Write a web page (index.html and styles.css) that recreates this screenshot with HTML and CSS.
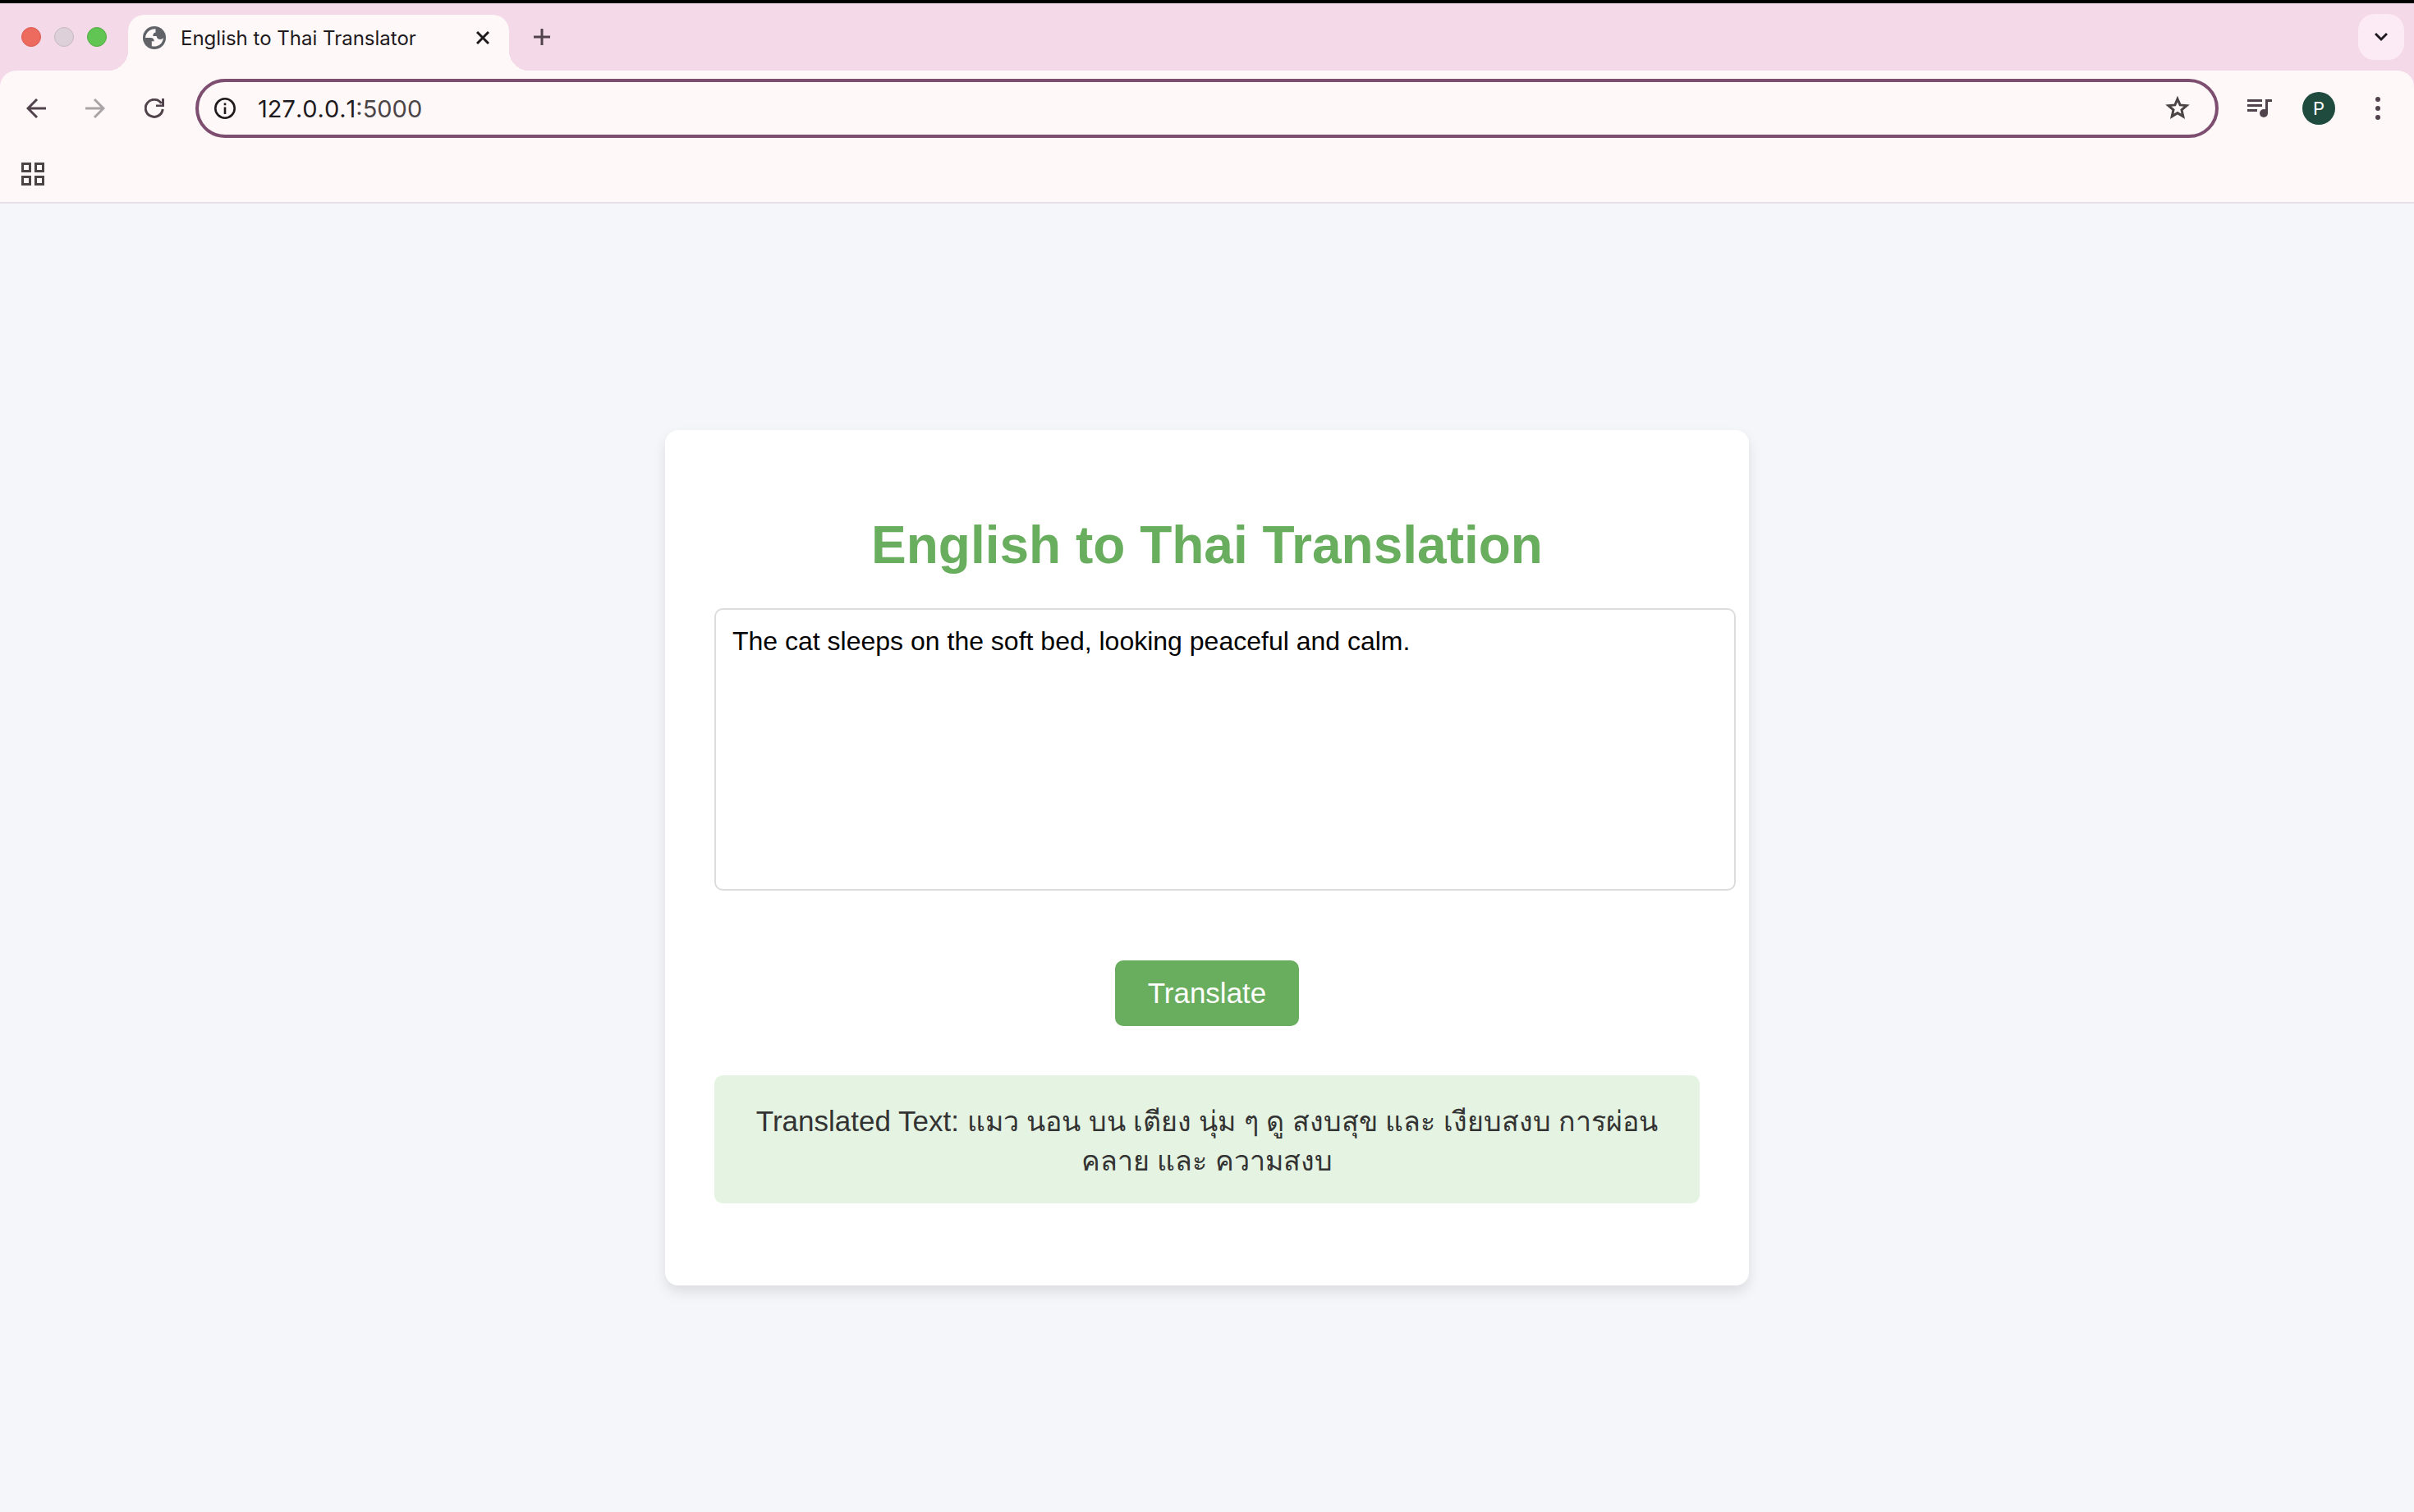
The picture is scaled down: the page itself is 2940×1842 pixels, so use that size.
FILE: index.html
```html
<!DOCTYPE html>
<html lang="en">
<head>
<meta charset="utf-8">
<title>English to Thai Translator</title>
<link rel="stylesheet" href="styles.css">
</head>
<body>
<header class="browser">
  <div class="tab-strip">
    <div class="window-controls">
      <button class="light light-close" aria-label="Close window"></button>
      <button class="light light-minimize" aria-label="Minimize window"></button>
      <button class="light light-zoom" aria-label="Zoom window"></button>
    </div>
    <div class="tab">
      <svg class="favicon" viewBox="0 0 28 28" aria-hidden="true"><circle cx="14" cy="14" r="14" fill="#5f6368"/><path d="M15.500 3.200C9 2.800 3.500 7.500 3 14h6.500c2.800 0 4.300 1.600 4.300 4.300h-3v6c7.500 1.500 13.500-3 14.200-10.300-.8 1.300-2 2-3.700 2-3 0-4.300-1.500-4.600-4h-4.400c0-2.500.8-4.200 3.200-4.500z" fill="#fef8f8"/></svg>
      <span class="tab-title">English to Thai Translator</span>
      <button class="tab-close" aria-label="Close tab"><svg width="16" height="16" viewBox="0 0 16 16"><path d="M1 1l14 14M15 1L1 15" stroke="#1f1a1d" stroke-width="3" fill="none"/></svg></button>
    </div>
    <button class="new-tab" aria-label="New tab"><svg width="20" height="20" viewBox="0 0 20 20"><path d="M10 0v20M0 10h20" stroke="#51434b" stroke-width="3"/></svg></button>
    <button class="tab-search" aria-label="Search tabs"><svg width="16" height="12" viewBox="0 0 16 12"><path d="M1 2l7 7 7-7" fill="none" stroke="#1f1a1d" stroke-width="3"/></svg></button>
  </div>
  <nav class="toolbar">
    <button class="tool" aria-label="Back"><svg width="24" height="24" viewBox="0 0 24 24"><path d="M24 12H2M13 1L2 12l11 11" fill="none" stroke="#51434b" stroke-width="3"/></svg></button>
    <button class="tool" aria-label="Forward" disabled><svg width="24" height="24" viewBox="0 0 24 24"><path d="M0 12h22M11 1l11 11-11 11" fill="none" stroke="#aba4a7" stroke-width="3"/></svg></button>
    <button class="tool" aria-label="Reload"><svg width="24" height="24" viewBox="0 0 24 24"><path d="M22.200 13A10.500 10.500 0 1 1 20.500 6" fill="none" stroke="#51434b" stroke-width="3"/><path d="M24 0v10H14V7.500h7V0z" fill="#51434b"/></svg></button>
    <div class="omnibox">
      <button class="site-info" aria-label="View site information"><svg width="26" height="26" viewBox="0 0 26 26"><circle cx="13" cy="13" r="11.700" fill="none" stroke="#1f1a1d" stroke-width="2.600"/><path d="M11.700 11.500h2.600V20h-2.600zM11.700 6.500h2.600v2.800h-2.600z" fill="#1f1a1d"/></svg></button>
      <a class="url" href="#">127.0.0.1<span class="port">:5000</span></a>
      <button class="bookmark" aria-label="Bookmark this tab"><svg width="30" height="30" viewBox="0 0 30 30"><path d="M15 3.500l3.100 7.400 8 .7-6.100 5.300 1.800 7.900-6.800-4.200-6.800 4.200L10 16.900l-6.100-5.300 8-.7z" fill="none" stroke="#4c4548" stroke-width="3"/></svg></button>
    </div>
    <button class="tool" aria-label="Media controls"><svg width="30" height="22" viewBox="0 0 30 22"><path d="M0 0h18v3H0zM0 6h18v3H0zM0 12h12v3H0zM22 0h8v3h-5v14h-3z" fill="#51434b"/><circle cx="20" cy="17" r="5" fill="#51434b"/></svg></button>
    <button class="tool" aria-label="Profile"><span class="avatar">P</span></button>
    <button class="tool" aria-label="Menu"><svg width="6" height="28" viewBox="0 0 6 28"><circle cx="3" cy="3" r="3" fill="#51434b"/><circle cx="3" cy="14" r="3" fill="#51434b"/><circle cx="3" cy="25" r="3" fill="#51434b"/></svg></button>
  </nav>
  <div class="bookmarks">
    <button class="apps" aria-label="Apps"><svg width="28" height="28" viewBox="0 0 28 28"><path d="M1.500 1.500h9v9h-9zM17.500 1.500h9v9h-9zM1.500 17.500h9v9h-9zM17.500 17.500h9v9h-9z" fill="none" stroke="#4c4548" stroke-width="3"/></svg></button>
  </div>
</header>
<main class="page">
  <section class="card">
    <h1 class="heading">English to Thai Translation</h1>
    <form class="form">
      <textarea class="source" aria-label="English text" spellcheck="false">The cat sleeps on the soft bed, looking peaceful and calm.</textarea>
      <button class="submit" type="button">Translate</button>
    </form>
    <p class="result">Translated Text: <span class="thai" lang="th">แมว นอน บน เตียง นุ่ม ๆ ดู สงบสุข และ เงียบสงบ การผ่อน<br>คลาย และ ความสงบ</span></p>
  </section>
</main>
</body>
</html>
```
FILE: styles.css
```css
* {
  box-sizing: border-box;
}

body {
  margin: 0;
  min-height: 100vh;
  display: flex;
  flex-direction: column;
  background: #f5f6fa;
  color: #333;
  font-family: "Liberation Sans", Arial, sans-serif;
}

button {
  padding: 0;
  border: 0;
  background: none;
  font-family: inherit;
}

svg {
  display: block;
}

/* Browser window */
.browser {
  border-top: 4px solid #000;
  border-bottom: 2px solid #e8e0e6;
  background: #f4dae9;
  font-family: Inter, sans-serif;
}

.tab-strip {
  display: flex;
  align-items: center;
  height: 82px;
  padding: 0 12px 0 26px;
}

.window-controls {
  display: flex;
  gap: 16px;
  width: 130px;
}

.light {
  width: 24px;
  height: 24px;
  border: 1px solid #d85a4e;
  border-radius: 50%;
  background: #ed6a5e;
}

.light-minimize {
  border-color: #c5b8c1;
  background: #ddd0d9;
}

.light-zoom {
  border-color: #52aa42;
  background: #61c554;
}

.tab {
  position: relative;
  display: flex;
  align-items: center;
  align-self: flex-end;
  width: 464px;
  height: 68px;
  padding: 0 24px 12px 18px;
  border-radius: 20px 20px 0 0;
  background: #fef8f8;
}

/* Flared feet that join the active tab to the toolbar */
.tab::before,
.tab::after {
  content: "";
  position: absolute;
  bottom: 0;
  width: 24px;
  height: 24px;
}

.tab::before {
  right: 100%;
  background: radial-gradient(circle at 0 0, transparent 24px, #fef8f8 24px);
}

.tab::after {
  left: 100%;
  background: radial-gradient(circle at 100% 0, transparent 24px, #fef8f8 24px);
}

.favicon {
  width: 28px;
  height: 28px;
}

.tab-title {
  flex: 1;
  padding-left: 18px;
  color: #1f1a1d;
  font-size: 24px;
  white-space: nowrap;
}

.new-tab {
  margin-left: 30px;
}

.tab-search {
  display: grid;
  place-items: center;
  width: 56px;
  height: 56px;
  margin-left: auto;
  border-radius: 20px;
  background: #fcebf4;
}

.toolbar {
  display: flex;
  align-items: center;
  height: 92px;
  padding: 0 8px;
  border-radius: 20px 20px 0 0;
  background: #fef8f8;
}

.tool {
  display: grid;
  flex: none;
  place-items: center;
  width: 72px;
  height: 72px;
}

.omnibox {
  display: flex;
  flex: 1;
  align-items: center;
  height: 72px;
  margin: 0 14px;
  padding: 0 31px 0 19px;
  border: 4px solid #7d4e70;
  border-radius: 36px;
}

.url {
  flex: 1;
  padding-left: 27px;
  color: #1f1a1d;
  font-size: 29px;
  font-kerning: none;
  text-decoration: none;
}

.port {
  color: #4c4548;
}

.avatar {
  display: grid;
  place-items: center;
  width: 40px;
  height: 40px;
  border-radius: 50%;
  background: #1f4b3f;
  color: #fff;
  font-size: 22px;
}

.bookmarks {
  display: flex;
  align-items: center;
  height: 68px;
  padding: 0 26px;
  background: #fef8f8;
}

/* Translator page */
.page {
  display: flex;
  flex: 1;
  align-items: center;
  justify-content: center;
}

.card {
  width: 1320px;
  max-width: 100%;
  padding: 103px 60px 100px;
  border-radius: 16px;
  background: #fff;
  box-shadow: 0 8px 16px rgba(0, 0, 0, 0.1);
  text-align: center;
}

.heading {
  margin: 0 0 40px;
  color: #69ad5e;
  font-size: 64px;
  line-height: 74px;
}

.source {
  display: block;
  box-sizing: content-box;
  width: 100%;
  height: 300px;
  margin-bottom: 85px;
  padding: 20px;
  border: 2px solid #dcdcdc;
  border-radius: 10px;
  background: #fff;
  color: #000;
  font-family: inherit;
  font-size: 32px;
  resize: none;
}

.submit {
  padding: 20px 40px;
  border-radius: 10px;
  background: #69ad5e;
  color: #fff;
  font-size: 35px;
  line-height: 40px;
}

.result {
  margin: 60px 0 0;
  padding: 32px 20px 28px;
  border-radius: 10px;
  background: #e5f3e2;
  font-size: 35px;
  line-height: 48px;
}

/* Thai glyphs run wider than the Latin ones at the same size */
.thai {
  font-size: 34px;
  line-height: 34px;
}
```
